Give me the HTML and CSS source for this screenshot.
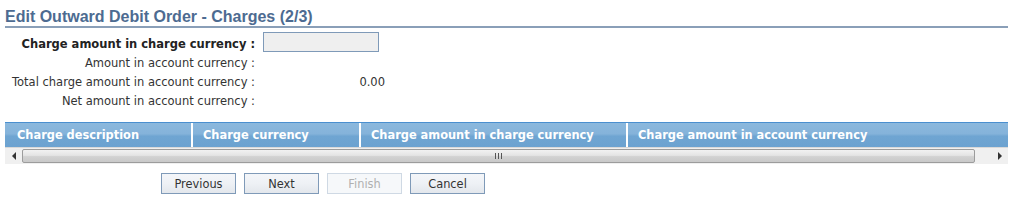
FILE: index.html
```html
<!DOCTYPE html>
<html>
<head>
<meta charset="utf-8">
<link rel="stylesheet" href="styles.css">
</head>
<body>
<div class="page">
  <h1 class="title">Edit Outward Debit Order - Charges (2/3)</h1>
  <div class="form">
    <div class="row">
      <div class="label bold">Charge amount in charge currency :</div>
      <div class="field"><div class="input"></div></div>
    </div>
    <div class="row">
      <div class="label">Amount in account currency :</div>
      <div class="field"></div>
    </div>
    <div class="row">
      <div class="label">Total charge amount in account currency :</div>
      <div class="field value">0.00</div>
    </div>
    <div class="row">
      <div class="label">Net amount in account currency :</div>
      <div class="field"></div>
    </div>
  </div>
  <div class="grid">
    <div class="grid-head">
      <div class="col c1">Charge description</div>
      <div class="col c2">Charge currency</div>
      <div class="col c3">Charge amount in charge currency</div>
      <div class="col c4">Charge amount in account currency</div>
    </div>
    <div class="scrollbar">
      <div class="arrow left"><span class="tri-left"></span></div>
      <div class="thumb"><span class="grip"></span></div>
      <div class="arrow right"><span class="tri-right"></span></div>
    </div>
  </div>
  <div class="buttons">
    <button class="btn">Previous</button>
    <button class="btn">Next</button>
    <button class="btn disabled">Finish</button>
    <button class="btn">Cancel</button>
  </div>
</div>
</body>
</html>
```

FILE: styles.css
```css
html, body {
  margin: 0;
  padding: 0;
  background: #ffffff;
}
body {
  font-family: "DejaVu Sans", Verdana, sans-serif;
  font-size: 11px;
  color: #333333;
}
.page {
  padding: 5px 7px 0 5px;
}
.title {
  margin: 0;
  font-family: "Liberation Sans", Arial, sans-serif;
  font-size: 16px;
  font-weight: bold;
  color: #4d6b91;
  line-height: 19px;
  padding-top: 2px;
  border-bottom: 2px solid #8a9fb8;
  height: 19px;
}
.form {
  padding-top: 3px;
}
.row {
  display: flex;
  align-items: center;
  height: 19px;
}
.row:first-child {
  height: 21px;
}
.label {
  width: 250px;
  text-align: right;
  font-size: 11.5px;
  color: #333;
  white-space: nowrap;
  padding-top: 2px;
}
.label.bold {
  font-weight: bold;
  font-size: 11.5px;
  color: #222;
  padding-top: 4px;
}
.field {
  margin-left: 8px;
  width: 122px;
}
.value {
  text-align: right;
  font-size: 11.5px;
  color: #333;
  padding-top: 2px;
}
.input {
  width: 114px;
  height: 18px;
  border: 1px solid #7f9ab8;
  background: #efefef;
}
.grid {
  margin-top: 13px;
}
.grid-head {
  display: flex;
  height: 24px;
  border-top: 1px solid #4a8fcf;
  background: linear-gradient(to bottom, #8bb8dd 0%, #85b3da 45%, #6fa5d2 55%, #6ca2d0 100%);
}
.col {
  color: #ffffff;
  font-weight: bold;
  font-size: 11.4px;
  line-height: 24px;
  padding-left: 10px;
  box-sizing: border-box;
  border-right: 2px solid #ffffff;
  white-space: nowrap;
}
.c1 { width: 188px; padding-left: 12px; }
.c2 { width: 168px; }
.c3 { width: 267px; }
.c4 { border-right: none; flex: 1; }
.scrollbar {
  display: flex;
  height: 16px;
  background: #f0f0f0;
  border-top: 1px solid #d8d8d8;
}
.arrow {
  width: 17px;
  display: flex;
  align-items: center;
  justify-content: center;
}
.arrow.right {
  width: 33px;
  justify-content: flex-end;
  padding-right: 6px;
  box-sizing: border-box;
}
.tri-left {
  width: 0; height: 0;
  border-top: 4px solid transparent;
  border-bottom: 4px solid transparent;
  border-right: 4px solid #333;
}
.tri-right {
  width: 0; height: 0;
  border-top: 4px solid transparent;
  border-bottom: 4px solid transparent;
  border-left: 4px solid #333;
}
.thumb {
  flex: 1;
  margin: 1px 0;
  border: 1px solid #9c9c9c;
  border-radius: 2px;
  background: linear-gradient(to bottom, #f2f2f2 0%, #e4e4e4 45%, #d2d2d2 55%, #c9c9c9 100%);
  display: flex;
  align-items: center;
  justify-content: center;
}
.grip {
  width: 7px;
  height: 6px;
  background: repeating-linear-gradient(to right, #555 0, #555 1px, transparent 1px, transparent 3px);
}
.buttons {
  display: flex;
  gap: 8px;
  padding-left: 156px;
  margin-top: 9px;
}
.btn {
  width: 75px;
  height: 21px;
  margin: 0;
  padding: 0;
  font-family: "DejaVu Sans", Verdana, sans-serif;
  font-size: 11.4px;
  color: #333;
  border: 1px solid #7f9ab8;
  background: linear-gradient(to bottom, #f4f6f9 0%, #eef1f5 50%, #e3e7ec 100%);
}
.btn.disabled {
  color: #b0b0b0;
  border-color: #cfd9e4;
  background: #f6f8fa;
}
```
